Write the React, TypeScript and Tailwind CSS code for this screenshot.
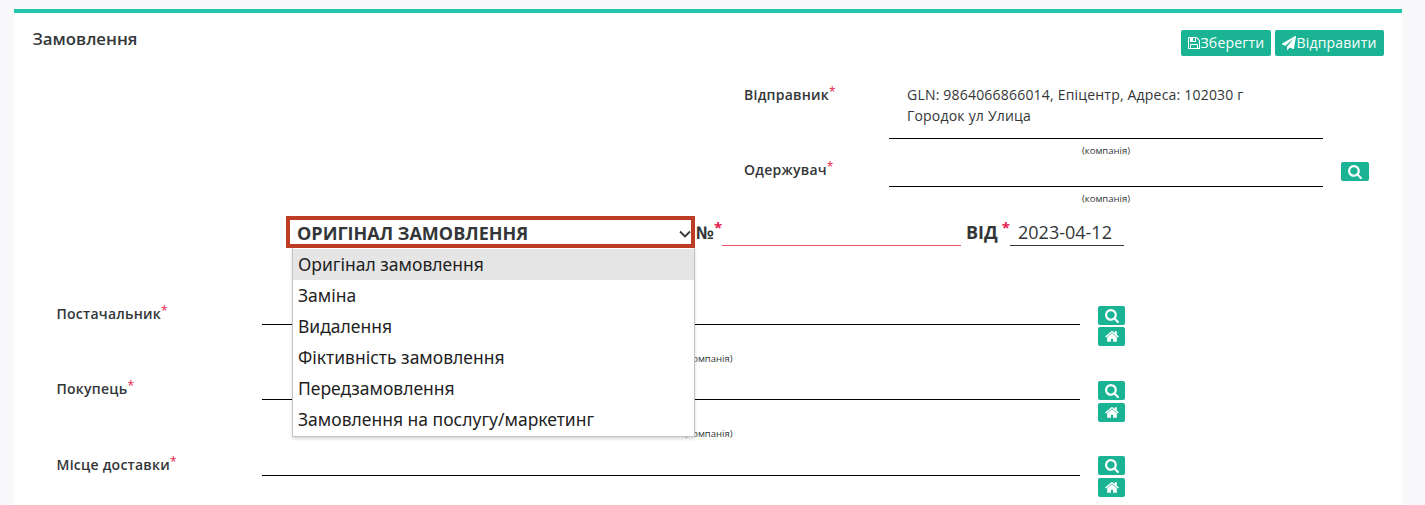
import React from "react";

type GlyphProps = { width: number; d: string; className: string };

function Glyph({ width, d, className }: GlyphProps) {
  return (
    <svg viewBox={`0 -1536 ${width} 1792`} fill="currentColor" className={className} aria-hidden="true">
      <path transform="scale(1,-1)" d={d} />
    </svg>
  );
}

const FLOPPY =
  "M384 0h768v384h-768v-384zM1280 0h128v896q0 14 -10 38.5t-20 34.5l-281 281q-10 10 -34 20t-39 10v-416q0 -40 -28 -68t-68 -28h-576q-40 0 -68 28t-28 68v416h-128v-1280h128v416q0 40 28 68t68 28h832q40 0 68 -28t28 -68v-416zM896 928v320q0 13 -9.5 22.5t-22.5 9.5h-192q-13 0 -22.5 -9.5t-9.5 -22.5v-320q0 -13 9.5 -22.5t22.5 -9.5h192q13 0 22.5 9.5t9.5 22.5zM1536 896v-928q0 -40 -28 -68t-68 -28h-1344q-40 0 -68 28t-28 68v1344q0 40 28 68t68 28h928q40 0 88 -20t76 -48l280 -280q28 -28 48 -76t20 -88z";
const PLANE =
  "M1764 1525q33 -24 27 -64l-256 -1536q-5 -29 -32 -45q-14 -8 -31 -8q-11 0 -24 5l-453 185l-242 -295q-18 -23 -49 -23q-13 0 -22 4q-19 7 -30.5 23.5t-11.5 36.5v349l864 1059l-1069 -925l-395 162q-37 14 -40 55q-2 40 32 59l1664 960q15 9 32 9q20 0 36 -11z";
const SEARCH =
  "M1152 704q0 185 -131.5 316.5t-316.5 131.5t-316.5 -131.5t-131.5 -316.5t131.5 -316.5t316.5 -131.5t316.5 131.5t131.5 316.5zM1664 -128q0 -52 -38 -90t-90 -38q-54 0 -90 38l-343 342q-179 -124 -399 -124q-143 0 -273.5 55.5t-225 150t-150 225t-55.5 273.5t55.5 273.5t150 225t225 150t273.5 55.5t273.5 -55.5t225 -150t150 -225t55.5 -273.5q0 -220 -124 -399l343 -343q37 -37 37 -90z";
const HOME =
  "M1408 544v-480q0 -26 -19 -45t-45 -19h-384v384h-256v-384h-384q-26 0 -45 19t-19 45v480q0 1 .5 3t.5 3l575 474l575 -474q1 -2 1 -6zM1631 613l-62 -74q-8 -9 -21 -11h-3q-13 0 -21 7l-692 577l-692 -577q-12 -8 -24 -7q-13 2 -21 11l-62 74q-8 10 -7 23.5t11 21.5l719 599q32 26 76 26t76 -26l244 -204v195q0 14 9 23t23 9h192q14 0 23 -9t9 -23v-408l219 -182q10 -8 11 -21.5t-7 -23.5z";

function Label({ children }: { children: React.ReactNode }) {
  return (
    <label className="flex items-start text-sm leading-[21px] font-semibold tracking-[0.25px] whitespace-nowrap">
      {children}
      <span className="-mt-[3px] text-[12px] font-medium text-[#e6194b]">*</span>
    </label>
  );
}

function SearchButton() {
  return (
    <button className="flex h-[19px] w-full items-start justify-center rounded-[2px] bg-[#1ab394] pt-[2px] text-white">
      <Glyph width={1664} d={SEARCH} className="h-[15px] w-[14px]" />
    </button>
  );
}

function HomeButton() {
  return (
    <button className="flex h-[19px] w-full items-start justify-center rounded-[2px] bg-[#1ab394] pt-[2px] text-white">
      <Glyph width={1664} d={HOME} className="h-[15px] w-[14px]" />
    </button>
  );
}

function Caption() {
  return <div className="text-center text-[9.5px] leading-[14px]">(компанія)</div>;
}

const PARTNERS = [
  { name: "Постачальник", label: "pt-0", line: "h-[22px]", gap: "gap-[2px]", caption: true },
  { name: "Покупець", label: "pt-0", line: "h-[22px]", gap: "gap-[3px]", caption: true },
  { name: "Місце доставки", label: "pt-px", line: "h-[23px]", gap: "gap-[3px]", caption: false },
];

const OPTIONS = [
  "Оригінал замовлення",
  "Заміна",
  "Видалення",
  "Фіктивність замовлення",
  "Передзамовлення",
  "Замовлення на послугу/маркетинг",
];

export default function App() {
  return (
    <div className="h-[505px] overflow-hidden bg-[#f9f9fc] pt-[9px] pr-[23px] pl-[14px] font-['Open_Sans',sans-serif] text-sm text-[#333638]">
      <main className="h-[500px] border-t-4 border-[#23c6a8] bg-white">
        <header className="flex items-start justify-between pt-[17px] pr-[18px] pl-[18.5px]">
          <h1 className="-mt-px text-[16.8px] leading-[19px] font-semibold">Замовлення</h1>
          <div className="flex gap-1 tracking-[0.2px] text-white">
            <button className="flex h-[26px] w-[90px] items-center rounded-[2px] bg-[#1ab394] pl-[7px]">
              <Glyph width={1536} d={FLOPPY} className="h-[14px] w-[12px] shrink-0" />
              <span className="pl-[0.5px]">Зберегти</span>
            </button>
            <button className="flex h-[26px] w-[109px] items-center rounded-[2px] bg-[#1ab394] pl-[7px]">
              <Glyph width={1792} d={PLANE} className="h-[14px] w-[14px] shrink-0" />
              <span className="pl-[0.5px]">Відправити</span>
            </button>
          </div>
        </header>

        <section className="mt-[28px] ml-[730px]">
          <div className="flex h-[75px]">
            <div className="w-[145px]"><Label>Відправник</Label></div>
            <div className="w-[434px]">
              <div className="h-[55px] border-b border-black px-[18px] leading-[21px] tracking-[0.2px]">
                GLN: 9864066866014, Епіцентр, Адреса: 102030 г Городок ул Улица
              </div>
              <div className="pt-[5px]"><Caption /></div>
            </div>
          </div>
          <div className="flex h-[57px]">
            <div className="w-[145px]"><Label>Одержувач</Label></div>
            <div className="w-[434px]">
              <div className="h-[28px] border-b border-black" />
              <div className="pt-[5px]"><Caption /></div>
            </div>
            <div className="ml-[18px] w-[28px] pt-[3px]"><SearchButton /></div>
          </div>
        </section>

        <section className="ml-[272px] flex h-[32px] items-start text-lg">
          <div className="relative h-[32px] w-[410px] shrink-0">
            <div className="flex h-[32px] w-[409px] items-center justify-between border-4 border-[#bd3c24] bg-white pr-0 pl-[7px]">
              <span className="pt-[2px] text-[18px] leading-6 font-bold">ОРИГІНАЛ ЗАМОВЛЕННЯ</span>
              <svg viewBox="0 0 12 8" className="mt-[3px] h-[8px] w-[12px]" fill="none" stroke="currentColor" strokeWidth="1.8">
                <path d="M1 1.500 6 6.500l5-5" />
              </svg>
            </div>
            <ul className="absolute top-[32px] left-[6px] z-10 w-[403px] border border-t-0 border-[#c3c3c3] bg-white pt-[1px] pb-px font-['Noto_Sans','Open_Sans',sans-serif] text-[17.5px] text-[#1f1f1f] shadow-[0_2px_3px_rgba(0,0,0,0.15)]">
              {OPTIONS.map((text, i) => (
                <li
                  key={text}
                  className={`flex h-[31px] items-center pl-[5px] whitespace-nowrap ${i === 0 ? "bg-[#e5e5e5]" : ""}`}
                >
                  {text}
                </li>
              ))}
            </ul>
          </div>
          <div className="flex w-[26px] shrink-0 pt-[4px] text-[17.5px] leading-6 font-bold">
            №<span className="-mt-[5px] text-[15px] text-[#e6194b]">*</span>
          </div>
          <div className="h-[30px] w-[239px] shrink-0 border-b border-[#ed5565]" />
          <div className="ml-[5px] flex w-[44px] shrink-0 pt-[4px] text-[18px] leading-6 font-bold">
            ВІД<span className="-mt-[5px] ml-[4px] text-[15px] text-[#e6194b]">*</span>
          </div>
          <div className="h-[30px] w-[114px] shrink-0 border-b border-[#333638] pt-[4px] pl-[8px] text-[18px] leading-6">
            2023-04-12
          </div>
        </section>

        <section className="mt-[55px] ml-[42px]">
          {PARTNERS.map((p) => (
            <div key={p.name} className="flex h-[75px]">
              <div className={`w-[206px] pl-[0.5px] ${p.label}`}><Label>{p.name}</Label></div>
              <div className="w-[818px]">
                <div className={`border-b border-black ${p.line}`} />
                {p.caption && <div className="pt-[27px] pl-[75px]"><Caption /></div>}
              </div>
              <div className={`ml-[18px] flex w-[27px] flex-col pt-[3px] ${p.gap}`}>
                <SearchButton />
                <HomeButton />
              </div>
            </div>
          ))}
        </section>
      </main>
    </div>
  );
}
